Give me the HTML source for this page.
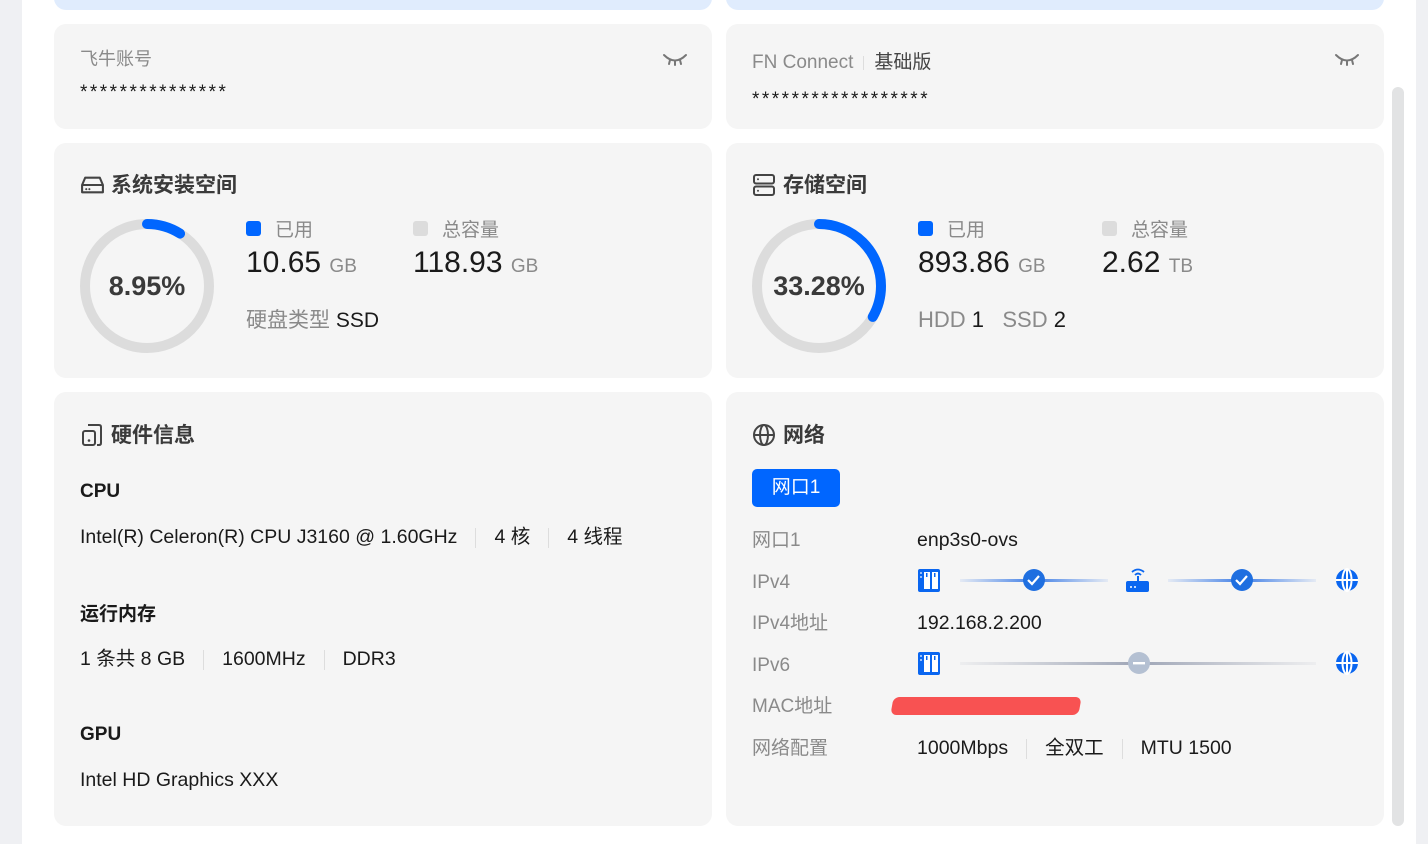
<!DOCTYPE html>
<html><head><meta charset="utf-8"><style>
*{margin:0;padding:0;box-sizing:border-box}
body{width:1428px;height:844px;overflow:hidden;background:#fff;font-family:"Liberation Sans","Noto Sans CJK SC",sans-serif;position:relative;color:#1a1a1a}
.a{position:absolute;white-space:nowrap;line-height:1.25}
.card{position:absolute;background:#f5f5f5;border-radius:12px}
.h{font-size:21px;font-weight:bold;color:#3a3a3a}
.g{color:#8a8a8a}
.sep{display:inline-block;width:1px;height:20px;background:#ddd;vertical-align:middle;margin:0 18px}
.st{font-size:19px;letter-spacing:2.5px;font-family:"Liberation Sans",sans-serif}
</style></head><body>
<div class="a" style="left:0;top:0;width:22px;height:844px;background:#eff0f3"></div>
<div class="a" style="left:1416px;top:0;width:12px;height:844px;background:#eff0f3"></div>
<div class="a" style="left:1392px;top:87px;width:12px;height:739px;background:#e2e3e4;border-radius:6px"></div>
<div class="card" style="left:54px;top:-20px;width:658px;height:30px;background:#e0ecfd"></div>
<div class="card" style="left:726px;top:-20px;width:658px;height:30px;background:#e0ecfd"></div>

<div class="card" style="left:54px;top:24px;width:658px;height:105px"></div>
<div class="a g" style="left:80px;top:48px;font-size:18px">飞牛账号</div>
<div class="a st" style="left:80px;top:81px">***************</div>
<svg class="a" style="left:662px;top:52px" width="26" height="16" viewBox="0 0 26 16"><path d="M2 3 Q13 14 24 3 M8 8 L7 12 M13 9 V13 M18 8 L19 12" stroke="#777" stroke-width="2" fill="none" stroke-linecap="round"/></svg>

<div class="card" style="left:726px;top:24px;width:658px;height:105px"></div>
<div class="a g" style="left:752px;top:51px;font-size:19px">FN Connect<span class="sep" style="margin:0 10px;height:14px"></span><span style="color:#444">基础版</span></div>
<div class="a st" style="left:752px;top:88px">******************</div>
<svg class="a" style="left:1334px;top:52px" width="26" height="16" viewBox="0 0 26 16"><path d="M2 3 Q13 14 24 3 M8 8 L7 12 M13 9 V13 M18 8 L19 12" stroke="#777" stroke-width="2" fill="none" stroke-linecap="round"/></svg>

<div class="card" style="left:54px;top:143px;width:658px;height:235px"></div>
<svg class="a" style="left:80px;top:174px" width="25" height="22" viewBox="0 0 24 20"><path d="M2 10 L5 3 H19 L22 10 V17 H2 Z M2 10 H22" stroke="#444" stroke-width="2" fill="none" stroke-linejoin="round"/><circle cx="6" cy="14" r="1" fill="#444"/><circle cx="9" cy="14" r="1" fill="#444"/></svg>
<div class="a h" style="left:111px;top:173px">系统安装空间</div>
<svg class="a" style="left:80px;top:219px" width="134" height="134"><circle cx="67" cy="67" r="62" stroke="#dcdcdc" stroke-width="10" fill="none"/><circle cx="67" cy="67" r="62" stroke="#0066ff" stroke-width="10" fill="none" stroke-dasharray="34.9 400" stroke-linecap="round" transform="rotate(-90 67 67)"/></svg>
<div class="a" style="left:80px;top:270px;width:134px;text-align:center;font-size:27px;font-weight:bold;color:#3a3a3a">8.95%</div>
<div class="a" style="left:246px;top:221px;width:15px;height:15px;background:#0066ff;border-radius:3px"></div>
<div class="a g" style="left:275px;top:219px;font-size:19px">已用</div>
<div class="a" style="left:246px;top:244px;font-size:30px">10.65 <span class="g" style="font-size:19px">GB</span></div>
<div class="a" style="left:413px;top:221px;width:15px;height:15px;background:#dcdcdc;border-radius:3px"></div>
<div class="a g" style="left:442px;top:219px;font-size:19px">总容量</div>
<div class="a" style="left:413px;top:244px;font-size:30px">118.93 <span class="g" style="font-size:19px">GB</span></div>
<div class="a" style="left:246px;top:308px;font-size:21px"><span class="g">硬盘类型</span> SSD</div>

<div class="card" style="left:726px;top:143px;width:658px;height:235px"></div>
<svg class="a" style="left:752px;top:173px" width="24" height="24" viewBox="0 0 24 24"><rect x="2" y="2" width="20" height="8.5" rx="2" stroke="#444" stroke-width="2" fill="none"/><rect x="2" y="13.5" width="20" height="8.5" rx="2" stroke="#444" stroke-width="2" fill="none"/><circle cx="6" cy="6.3" r="1" fill="#444"/><circle cx="6" cy="17.8" r="1" fill="#444"/></svg>
<div class="a h" style="left:783px;top:173px">存储空间</div>
<svg class="a" style="left:752px;top:219px" width="134" height="134"><circle cx="67" cy="67" r="62" stroke="#dcdcdc" stroke-width="10" fill="none"/><circle cx="67" cy="67" r="62" stroke="#0066ff" stroke-width="10" fill="none" stroke-dasharray="129.7 400" stroke-linecap="round" transform="rotate(-90 67 67)"/></svg>
<div class="a" style="left:752px;top:270px;width:134px;text-align:center;font-size:27px;font-weight:bold;color:#3a3a3a">33.28%</div>
<div class="a" style="left:918px;top:221px;width:15px;height:15px;background:#0066ff;border-radius:3px"></div>
<div class="a g" style="left:947px;top:219px;font-size:19px">已用</div>
<div class="a" style="left:918px;top:244px;font-size:30px">893.86 <span class="g" style="font-size:19px">GB</span></div>
<div class="a" style="left:1102px;top:221px;width:15px;height:15px;background:#dcdcdc;border-radius:3px"></div>
<div class="a g" style="left:1131px;top:219px;font-size:19px">总容量</div>
<div class="a" style="left:1102px;top:244px;font-size:30px">2.62 <span class="g" style="font-size:19px">TB</span></div>
<div class="a" style="left:918px;top:306px;font-size:22px"><span class="g">HDD</span> 1 &nbsp; <span class="g">SSD</span> 2</div>

<div class="card" style="left:54px;top:392px;width:658px;height:434px"></div>
<svg class="a" style="left:80px;top:423px" width="24" height="24" viewBox="0 0 24 24"><path d="M8 2 H19 Q21 2 21 4 V20 Q21 22 19 22 H17" stroke="#444" stroke-width="2" fill="none"/><rect x="3" y="8" width="12" height="14" rx="2" stroke="#444" stroke-width="2" fill="none"/><circle cx="9" cy="17.5" r="1.3" fill="#444"/></svg>
<div class="a h" style="left:111px;top:423px">硬件信息</div>
<div class="a" style="left:80px;top:480px;font-size:19px;font-weight:bold">CPU</div>
<div class="a" style="left:80px;top:525px;font-size:19.5px">Intel(R) Celeron(R) CPU J3160 @ 1.60GHz<span class="sep"></span>4 核<span class="sep"></span>4 线程</div>
<div class="a" style="left:80px;top:603px;font-size:19px;font-weight:bold">运行内存</div>
<div class="a" style="left:80px;top:647px;font-size:19.5px">1 条共 8 GB<span class="sep"></span>1600MHz<span class="sep"></span>DDR3</div>
<div class="a" style="left:80px;top:723px;font-size:19px;font-weight:bold">GPU</div>
<div class="a" style="left:80px;top:768px;font-size:19.5px">Intel HD Graphics XXX</div>

<div class="card" style="left:726px;top:392px;width:658px;height:434px"></div>
<svg class="a" style="left:752px;top:423px" width="24" height="24" viewBox="0 0 24 24"><circle cx="12" cy="12" r="10" stroke="#444" stroke-width="2" fill="none"/><ellipse cx="12" cy="12" rx="4" ry="10" stroke="#444" stroke-width="2" fill="none"/><path d="M2 12 H22" stroke="#444" stroke-width="2"/></svg>
<div class="a h" style="left:783px;top:423px">网络</div>
<div class="a" style="left:752px;top:469px;width:88px;height:38px;background:#0066ff;border-radius:5px;color:#fff;font-size:19px;text-align:center;line-height:38px">网口1</div>
<div class="a g" style="left:752px;top:529px;font-size:19px">网口1</div>
<div class="a" style="left:917px;top:528px;font-size:19.5px">enp3s0-ovs</div>
<div class="a g" style="left:752px;top:571px;font-size:19px">IPv4</div>
<div class="a g" style="left:752px;top:612px;font-size:19px">IPv4地址</div>
<div class="a" style="left:917px;top:611px;font-size:19.5px">192.168.2.200</div>
<div class="a g" style="left:752px;top:654px;font-size:19px">IPv6</div>
<div class="a g" style="left:752px;top:695px;font-size:19px">MAC地址</div>
<div class="a" style="left:892px;top:697px;width:188px;height:18px;background:#f85252;border-radius:6px;transform:skewX(-10deg)"></div>
<div class="a g" style="left:752px;top:737px;font-size:19px">网络配置</div>
<div class="a" style="left:917px;top:736px;font-size:19.5px">1000Mbps<span class="sep"></span>全双工<span class="sep"></span>MTU 1500</div>

<svg class="a" style="left:900px;top:560px" width="480" height="120" viewBox="0 0 480 120">
<defs>
<linearGradient id="b" x1="0" x2="1"><stop offset="0" stop-color="#4c86e8" stop-opacity="0.1"/><stop offset="0.5" stop-color="#3f7ee6"/><stop offset="1" stop-color="#4c86e8" stop-opacity="0.1"/></linearGradient>
<linearGradient id="gr" x1="0" x2="1"><stop offset="0" stop-color="#a6acbb" stop-opacity="0.1"/><stop offset="0.5" stop-color="#9ea5b6"/><stop offset="1" stop-color="#a6acbb" stop-opacity="0.1"/></linearGradient>
<g id="sw"><rect x="18" y="9" width="22" height="23" rx="2" fill="#0a66f0"/><rect x="24" y="12" width="6" height="17" fill="#fff"/><rect x="32" y="12" width="6" height="17" fill="#fff"/><circle cx="21" cy="13" r="0.9" fill="#fff"/><circle cx="21" cy="17" r="0.9" fill="#fff"/><rect x="26" y="13" width="1.5" height="4" fill="#0a66f0"/><rect x="34" y="13" width="1.5" height="4" fill="#0a66f0"/></g>
<g id="gl"><circle cx="447" cy="20" r="11" fill="#0a66f0"/><ellipse cx="447" cy="20" rx="4.5" ry="11" fill="none" stroke="#fff" stroke-width="2"/><path d="M436 20 H458 M447 9 V31" stroke="#fff" stroke-width="2"/></g>
</defs>
<use href="#sw"/>
<rect x="60" y="19" width="148" height="3" fill="url(#b)"/>
<circle cx="134" cy="20" r="11" fill="#1f6fe0"/><path d="M128 20 L132 24 L139 16" stroke="#fff" stroke-width="2.2" fill="none"/>
<path d="M232 12 Q238 7 244 12 M235 15 Q238 12 241 15" stroke="#0a66f0" stroke-width="1.8" fill="none"/><rect x="237" y="16" width="2" height="6" fill="#0a66f0"/><rect x="226" y="21" width="23" height="11" rx="2" fill="#0a66f0"/><circle cx="231" cy="27" r="1" fill="#fff"/><circle cx="235" cy="27" r="1" fill="#fff"/>
<rect x="268" y="19" width="148" height="3" fill="url(#b)"/>
<circle cx="342" cy="20" r="11" fill="#1f6fe0"/><path d="M336 20 L340 24 L347 16" stroke="#fff" stroke-width="2.2" fill="none"/>
<use href="#gl"/>
<g transform="translate(0,83)"><use href="#sw"/><rect x="60" y="19" width="356" height="3" fill="url(#gr)"/><circle cx="239" cy="20" r="11" fill="#b4c0d2"/><rect x="233" y="19" width="12" height="2.4" fill="#fff"/><use href="#gl"/></g>
</svg>
</body></html>
